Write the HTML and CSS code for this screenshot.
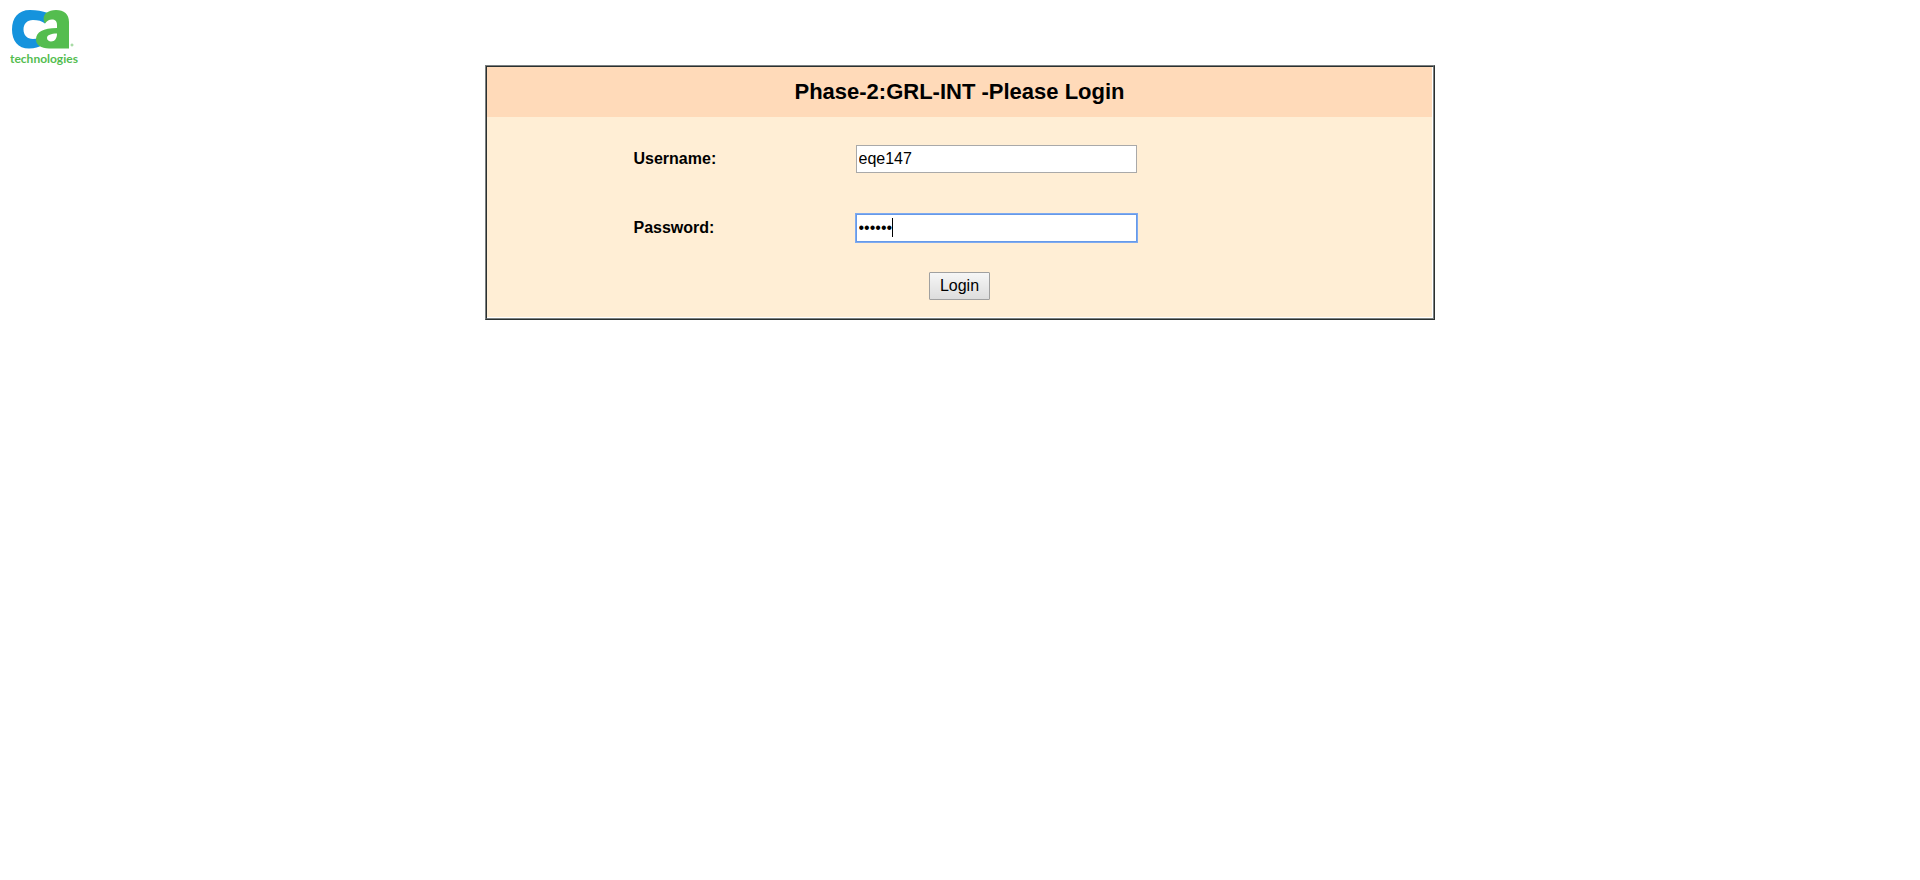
FILE: index.html
```html
<!DOCTYPE html>
<html lang="en">
<head>
<meta charset="utf-8">
<title>Phase-2:GRL-INT -Please Login</title>
<link rel="stylesheet" href="styles.css">
</head>
<body>
<header class="brand">
  <svg class="logo" width="68" height="58" viewBox="0 0 68 58" role="img" aria-label="ca technologies">
    <path fill="#1593dd" d="M20 0C8 0 2 8 2 19.500C2 31 8 38.500 19 38.500C25 38.500 29 37 32 35V24C30 27 27 29 23 29C17 29 13.500 25 13.500 19.500C13.500 14 17 10 23 10C28 10 32 11 35 13.500L38 3C32 1 27 0 20 0z"/>
    <path fill="#54bd4f" fill-rule="evenodd" d="M36 3C39 1 42 0 46 0C54 0 59 4 59 12V38.500H39C31 38.500 26 35 26 29.500C26 22 33 18 47 18V15C47 11 45 9.500 42 9.500C39 9.500 37 11 35 13.500C33 10 33 6 36 3zM47 23.500C41 23.500 37 25 37 28C37 30 39 31.500 41 31.500C45 31.500 47 28 47 23.500z"/>
    <circle cx="62" cy="35" r="1" fill="none" stroke="#8bd087"/>
    <text class="logo-word" x="0" y="53">technologies</text>
  </svg>
</header>
<main class="panel">
  <form class="panel-body">
    <h1 class="title">Phase-2:GRL-INT -Please Login</h1>
    <div class="fields">
      <label for="username">Username:</label>
      <input class="field" id="username" type="text" value="eqe147">
      <label for="password">Password:</label>
      <div class="secret">
        <input class="field" id="password" type="password" value="eqe147" autofocus>
        <span class="caret"></span>
      </div>
    </div>
    <div class="actions"><button class="login" type="button">Login</button></div>
  </form>
</main>
</body>
</html>
```
FILE: styles.css
```css
* { box-sizing: border-box; }
body {
  margin: 10px;
  background: #fff;
  color: #000;
  font: 16px/20px "Liberation Sans", Arial, sans-serif;
}
.brand { height: 55px; }
.logo { display: block; overflow: visible; }
.logo-word { font: bold 12px Lato, sans-serif; fill: #54bd4f; }
.panel {
  width: 50%;
  margin: 0 auto;
  border: 1px solid;
  border-color: #7b8080 #2b3030 #2b3030 #7b8080;
}
.panel-body {
  border: 1px solid;
  border-color: #2b3030 #7b8080 #7b8080 #2b3030;
  padding: 0 1px 1px 0;
  background: linear-gradient(#ffeed5, #ffeed5) content-box no-repeat, #fff;
}
.title {
  margin: 0;
  padding: 10px;
  background: #ffdab9;
  font-size: 22px;
  line-height: 30px;
  text-align: center;
}
.fields {
  display: grid;
  grid-template-columns: 222px 281px;
  row-gap: 41px;
  align-items: center;
  justify-content: center;
  padding: 28px 149px 30px 0;
  font-weight: bold;
}
.field {
  display: block;
  width: 100%;
  height: 28px;
  padding: 1px 2px;
  border: 1px solid #a9a9a9;
  background: #fff;
  color: #000;
  font: 16px "Liberation Sans", Arial, sans-serif;
}
.field:focus {
  border-color: #6699e8;
  outline: 1px solid #7eaaf0;
  caret-color: transparent;
}
.secret { position: relative; }
.caret {
  position: absolute;
  top: 4px;
  left: 36px;
  width: 1px;
  height: 19px;
  background: #000;
}
.actions { display: flex; justify-content: center; padding-bottom: 17px; }
.login {
  height: 28px;
  padding: 1px 10px;
  border: 1px solid #a0a0a0;
  border-radius: 1px;
  background: linear-gradient(#f6f6f6, #dddddd);
  color: #000;
  font: 16px "Liberation Sans", Arial, sans-serif;
}
```
